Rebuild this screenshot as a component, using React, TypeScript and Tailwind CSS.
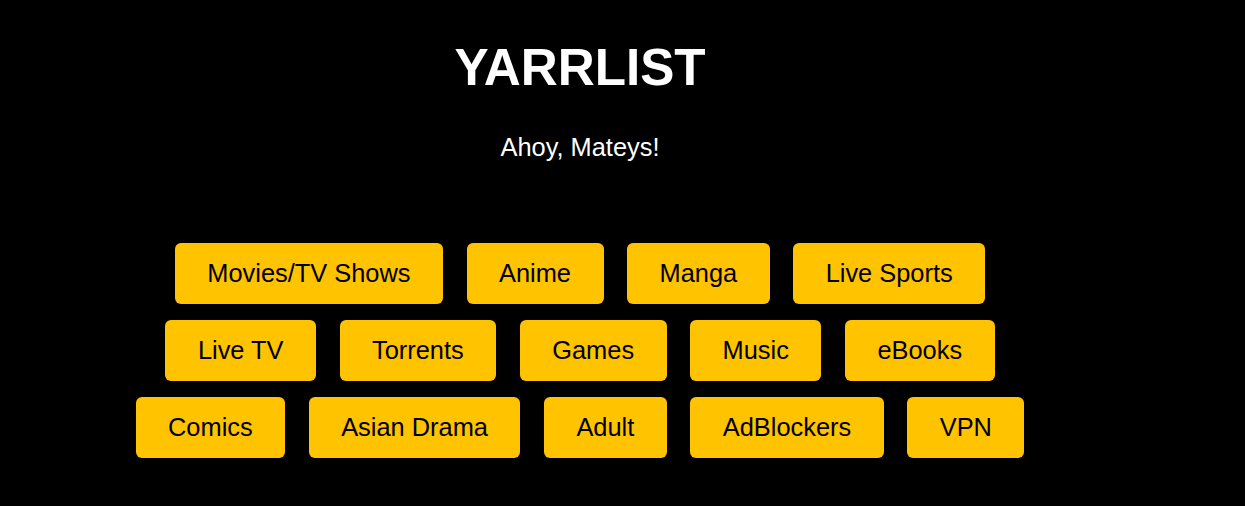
const rows: string[][] = [
  ["Movies/TV Shows", "Anime", "Manga", "Live Sports"],
  ["Live TV", "Torrents", "Games", "Music", "eBooks"],
  ["Comics", "Asian Drama", "Adult", "AdBlockers", "VPN"],
];

export default function App() {
  return (
    <div className="min-h-[506px] w-full bg-black font-['Liberation_Sans',Arial,sans-serif]">
      <div className="flex w-[1160px] flex-col items-center pt-[39px]">
        <h1 className="text-[51.2px] font-bold leading-[1.15] text-white">YARRLIST</h1>
        <p className="mt-[35px] text-[25.4px] leading-[1.15] text-white">Ahoy, Mateys!</p>
        <div className="mt-[81px] flex flex-col items-center gap-[16px]">
          {rows.map((row, i) => (
            <div key={i} className="flex gap-[23.5px]">
              {row.map((label) => (
                <button
                  key={label}
                  className="h-[61px] rounded-[6px] bg-[#ffc300] px-[32.5px] text-[25.4px] leading-[1.15] text-black"
                >
                  {label}
                </button>
              ))}
            </div>
          ))}
        </div>
      </div>
    </div>
  );
}
